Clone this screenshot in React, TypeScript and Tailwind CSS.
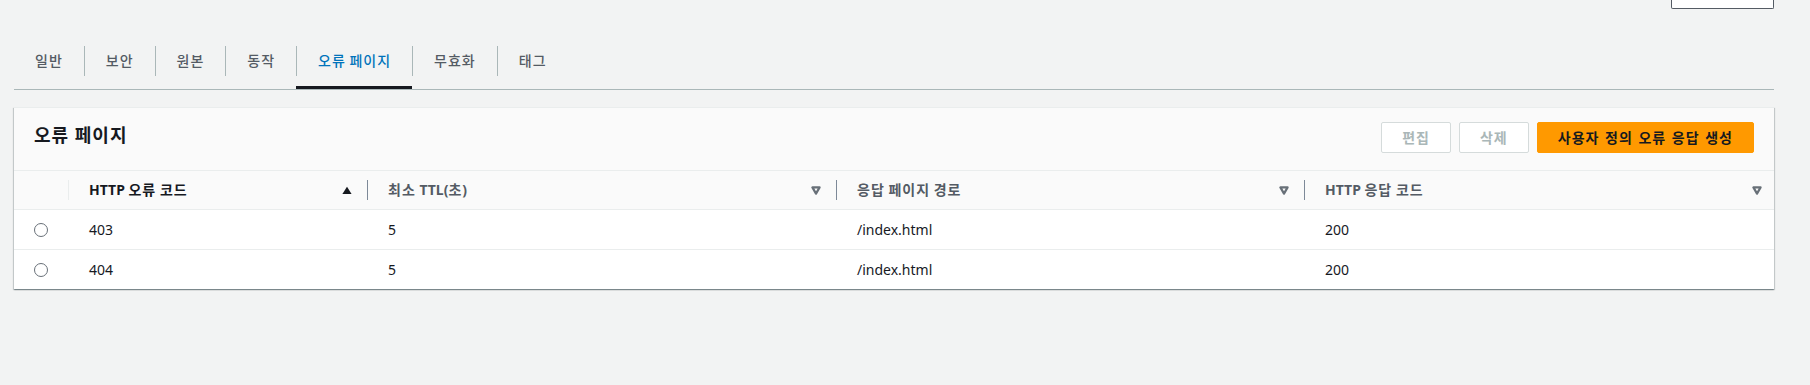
import React from 'react'

const tabs = ['일반', '보안', '원본', '동작', '오류 페이지', '무효화', '태그']

const rows = [
  { code: '403', ttl: '5', path: '/index.html', resp: '200' },
  { code: '404', ttl: '5', path: '/index.html', resp: '200' },
]

// Hangul in the reference runs a bit wider than Noto CJK at 14px
function K({ children }: { children: string }) {
  const parts = children.split(/([가-힣]+)/)
  return (
    <span>
      {parts.map((p, i) =>
        /[가-힣]/.test(p) ? (
          <span key={i} className="tracking-[1px]">
            {p}
          </span>
        ) : (
          p
        )
      )}
    </span>
  )
}

function SortUp() {
  return (
    <svg width="10" height="9" viewBox="0 0 10 9" className="shrink-0">
      <polygon points="5,0.8 9.6,8 0.4,8" fill="#16191f" />
    </svg>
  )
}

function SortNone() {
  return (
    <svg width="10" height="9" viewBox="0 0 10 9" className="shrink-0">
      <polygon points="1.4,1.4 8.6,1.4 5,7.6" fill="none" stroke="#687078" strokeWidth="2.2" strokeLinejoin="round" />
    </svg>
  )
}

function HeadCell({
  label,
  sorted,
  first,
  last,
}: {
  label: string
  sorted?: boolean
  first?: boolean
  last?: boolean
}) {
  return (
    <div className="flex items-center h-full">
      <div className={`w-px h-5 shrink-0 ${first ? 'bg-[#eaeded]' : 'bg-[#7d8998]'}`} />
      <div className={`flex-1 flex items-center justify-between pl-5 ${last ? 'pr-3' : 'pr-[15px]'}`}>
        <span className={`font-bold ${sorted ? 'text-[#16191f]' : 'text-[#545b64]'}`}>
          <K>{label}</K>
        </span>
        {sorted ? <SortUp /> : <SortNone />}
      </div>
    </div>
  )
}

export default function App() {
  return (
    <div className="w-[1810px] h-[385px] bg-[#f2f3f3] font-['Noto_Sans','Noto_Sans_CJK_KR',sans-serif] text-[14px] leading-[22px] text-[#16191f] overflow-hidden">
      <div className="pl-[14px] pr-[36px]">
        {/* bottom edge of the header button above */}
        <div className="flex justify-end h-[9px]">
          <div className="w-[103px] h-[9px] bg-white border border-t-0 border-[#545b64] rounded-b-[2px]" />
        </div>

        {/* Tabs */}
        <div className="mt-[29px] flex border-b border-[#aab7b8]">
          {tabs.map((t, i) => {
            const active = t === '오류 페이지'
            return (
              <div
                key={t}
                className={`pt-2 pb-[10px] border-b-[3px] ${active ? 'border-[#16191f]' : 'border-transparent'}`}
              >
                <div
                  className={`h-[30px] flex items-center pl-[21px] pr-[21px] font-medium ${
                    i > 0 ? 'border-l border-[#aab7b8]' : ''
                  } ${active ? 'text-[#0073bb]' : 'text-[#545b64]'}`}
                >
                  <K>{t}</K>
                </div>
              </div>
            )
          })}
        </div>

        {/* Card */}
        <div className="mt-[17px] bg-white border-t border-[#eaeded] shadow-[0_1px_1px_0_rgba(0,28,36,0.3),1px_1px_1px_0_rgba(0,28,36,0.15),-1px_1px_1px_0_rgba(0,28,36,0.15)]">
          <div className="h-[63px] bg-[#fafafa] border-b border-[#eaeded] flex items-start justify-between px-5 pt-[13px]">
            <h2 className="text-[18px] leading-[28px] font-bold text-[#16191f] tracking-[1px]">오류 페이지</h2>
            <div className="flex gap-2 mt-px">
              <button className="h-[31px] px-5 rounded-[2px] border border-[#d5dbdb] bg-white text-[#aab7b8] font-bold tracking-[1px]">
                편집
              </button>
              <button className="h-[31px] px-5 rounded-[2px] border border-[#d5dbdb] bg-white text-[#aab7b8] font-bold tracking-[1px]">
                삭제
              </button>
              <button className="h-[31px] px-5 rounded-[2px] border border-[#ff9900] bg-[#ff9900] text-[#16191f] font-bold tracking-[1px] [word-spacing:1px]">
                사용자 정의 오류 응답 생성
              </button>
            </div>
          </div>

          {/* Table */}
          <div className="grid grid-cols-[54px_299px_469px_468px_1fr] h-[39px] bg-[#fafafa] border-b border-[#eaeded]">
            <div />
            <HeadCell label="HTTP 오류 코드" sorted first />
            <HeadCell label="최소 TTL(초)" />
            <HeadCell label="응답 페이지 경로" />
            <HeadCell label="HTTP 응답 코드" last />
          </div>
          {rows.map((r, i) => (
            <div
              key={r.code}
              className={`grid grid-cols-[54px_299px_469px_468px_1fr] items-center ${
                i === 0 ? 'h-[40px] border-b border-[#eaeded]' : 'h-[39px]'
              }`}
            >
              <div className="flex justify-center">
                <span className="w-[14px] h-[14px] rounded-full border border-[#687078] bg-white" />
              </div>
              <div className="pl-[21px]">{r.code}</div>
              <div className="pl-[21px]">{r.ttl}</div>
              <div className="pl-[21px]">{r.path}</div>
              <div className="pl-[21px]">{r.resp}</div>
            </div>
          ))}
        </div>
      </div>
    </div>
  )
}
